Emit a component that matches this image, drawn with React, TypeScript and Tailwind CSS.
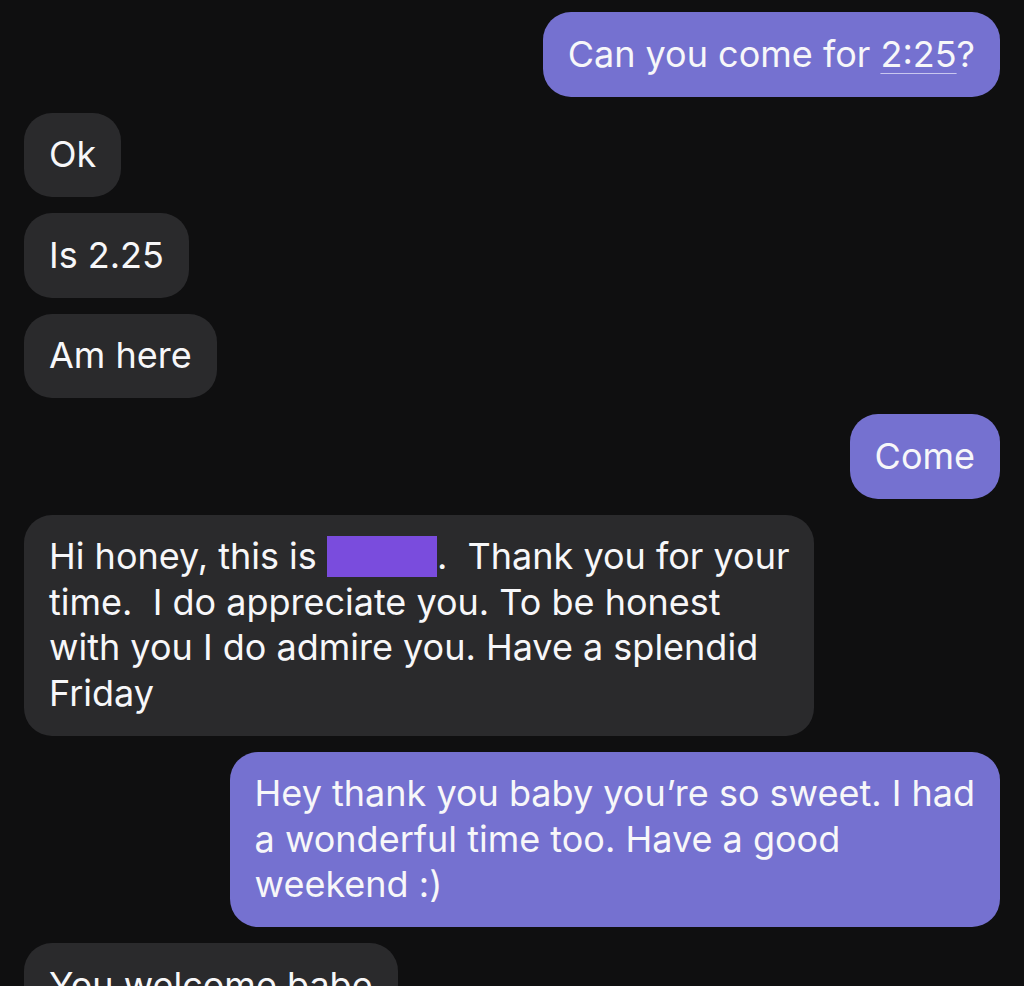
import React from "react";

type Msg = { id: number; mine: boolean; lines: React.ReactNode[]; tight?: boolean };

const Redacted = () => (
  <span className="inline-block w-[110px] h-[41px] align-[-8px] bg-[#7a4cdd]" />
);

const messages: Msg[] = [
  {
    id: 1,
    mine: true,
    lines: [
      <>
        Can you come for <span className="underline decoration-1 underline-offset-[6px] decoration-[#c9c7ef]">2:25</span>?
      </>,
    ],
  },
  { id: 2, mine: false, lines: ["Ok"] },
  { id: 3, mine: false, lines: ["Is 2.25"] },
  { id: 4, mine: false, lines: ["Am here"] },
  { id: 5, mine: true, lines: ["Come"] },
  {
    id: 6,
    mine: false,
    tight: true,
    lines: [
      <>
        Hi honey, this is <Redacted />.&nbsp; Thank you for your
      </>,
      "time.  I do appreciate you. To be honest",
      "with you I do admire you. Have a splendid",
      "Friday",
    ],
  },
  {
    id: 7,
    mine: true,
    tight: true,
    lines: [
      "Hey thank you baby you\u2019re so sweet. I had",
      "a wonderful time too. Have a good",
      "weekend :)",
    ],
  },
  { id: 8, mine: false, lines: ["You welcome babe"] },
];

export default function App() {
  return (
    <div className="w-[1024px] h-[986px] overflow-hidden bg-[#0f0f10] font-['Inter',sans-serif] text-[#f7f7f9]">
      <div className="flex flex-col gap-4 px-6 pt-3">
        {messages.map((m) => (
          <div key={m.id} className={`flex ${m.mine ? "justify-end" : "justify-start"}`}>
            <div
              className={`rounded-[28px] px-[25px] py-[19.5px] text-[36px] leading-[45.5px] whitespace-pre ${
                m.mine ? "bg-[#7571d0]" : "bg-[#2a2a2c]"
              }`}
            >
              {m.lines.map((l, i) => (
                <div key={i}>{l}</div>
              ))}
            </div>
          </div>
        ))}
      </div>
    </div>
  );
}
